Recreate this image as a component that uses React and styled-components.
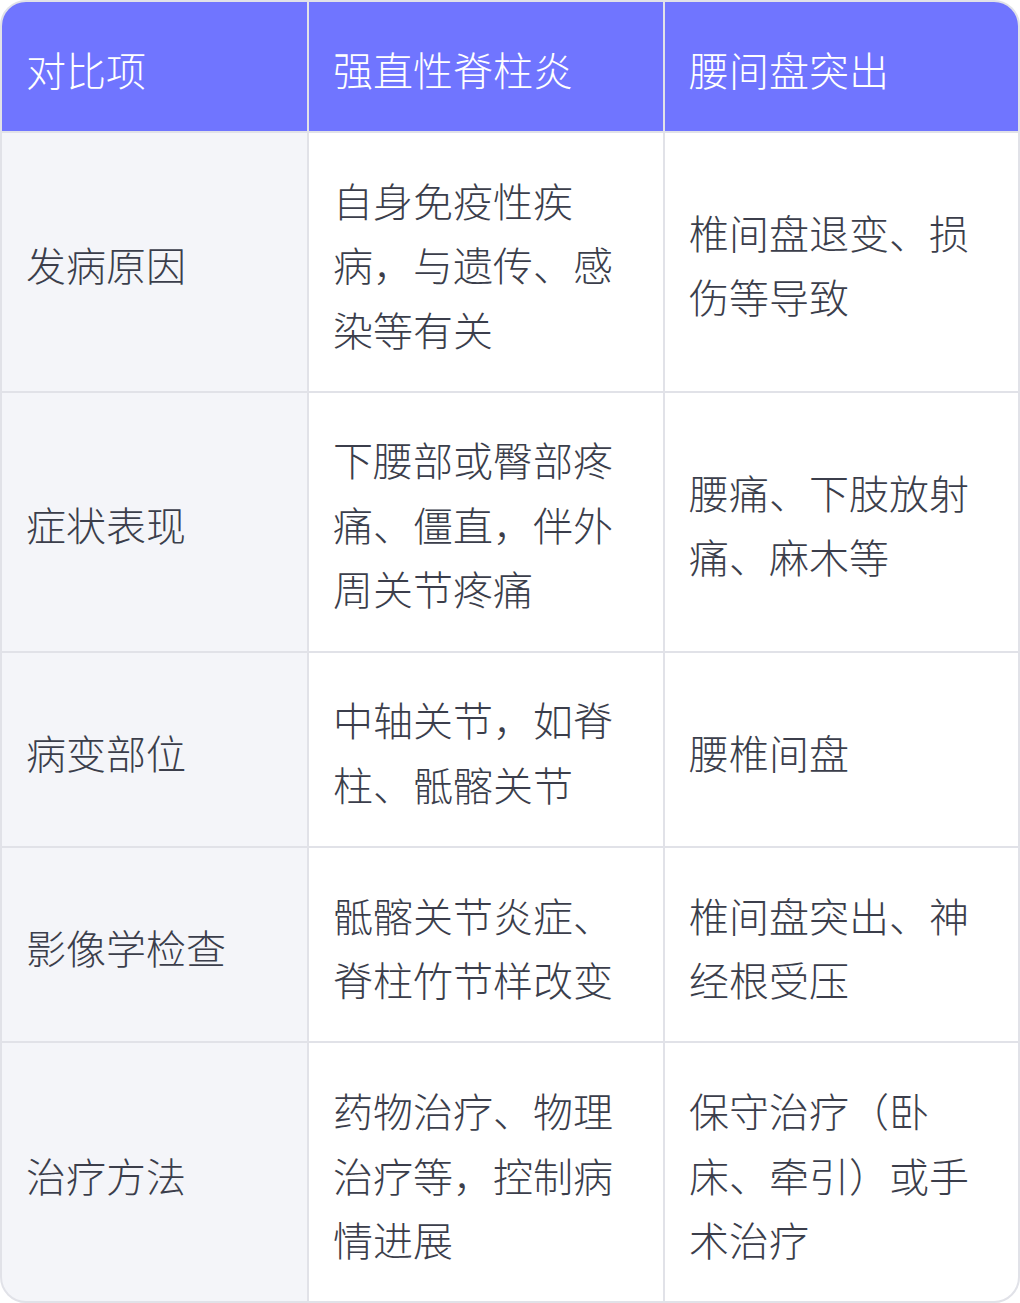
import React from "react";
import styled, { createGlobalStyle } from "styled-components";

const Global = createGlobalStyle`
  html, body { margin: 0; padding: 0; background: #ffffff; }
  body { font-family: "Noto Sans CJK SC", "Noto Sans", sans-serif; }
`;

const Card = styled.div`
  width: 1020px;
  box-sizing: border-box;
  border: 2px solid #e1e2e8;
  border-radius: 26px;
  overflow: hidden;
  background: #e1e2e8;
  display: grid;
  grid-template-columns: 305px 354px 1fr;
  gap: 2px;
`;

const Cell = styled.div`
  display: flex;
  align-items: center;
  box-sizing: border-box;
  padding: 34.7px 26px 29.7px 24px;
  font-size: 40px;
  line-height: 64.5px;
  font-weight: 300;
  color: ${(p) => (p.$head ? "#ffffff" : "#3b3e4b")};
  background: ${(p) => (p.$head ? "#7075ff" : p.$label ? "#f4f5f9" : "#ffffff")};
  word-break: break-all;
`;

const header = ["对比项", "强直性脊柱炎", "腰间盘突出"];
const rows = [
  ["发病原因", "自身免疫性疾病，与遗传、感染等有关", "椎间盘退变、损伤等导致"],
  ["症状表现", "下腰部或臀部疼痛、僵直，伴外周关节疼痛", "腰痛、下肢放射痛、麻木等"],
  ["病变部位", "中轴关节，如脊柱、骶髂关节", "腰椎间盘"],
  ["影像学检查", "骶髂关节炎症、脊柱竹节样改变", "椎间盘突出、神经根受压"],
  ["治疗方法", "药物治疗、物理治疗等，控制病情进展", "保守治疗（卧床、牵引）或手术治疗"],
];

export default function App() {
  return (
    <>
      <Global />
      <Card>
        {header.map((h) => (
          <Cell key={h} $head>
            {h}
          </Cell>
        ))}
        {rows.map((r) =>
          r.map((c, i) => (
            <Cell key={r[0] + i} $label={i === 0}>
              {c}
            </Cell>
          ))
        )}
      </Card>
    </>
  );
}
